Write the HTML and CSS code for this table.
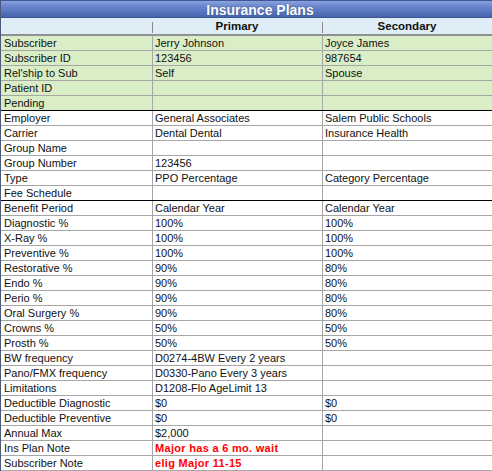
FILE: index.html
```html
<!DOCTYPE html>
<html>
<head>
<meta charset="utf-8">
<link rel="stylesheet" href="styles.css">
</head>
<body>
<div class="panel">
  <div class="title">Insurance Plans</div>
  <div class="head">
    <div class="hcell"></div>
    <div class="hcell sep">Primary</div>
    <div class="hcell sep">Secondary</div>
  </div>
  <div class="group green">
    <div class="row"><div class="c">Subscriber</div><div class="c">Jerry Johnson</div><div class="c">Joyce James</div></div>
    <div class="row"><div class="c">Subscriber ID</div><div class="c">123456</div><div class="c">987654</div></div>
    <div class="row"><div class="c">Rel'ship to Sub</div><div class="c">Self</div><div class="c">Spouse</div></div>
    <div class="row"><div class="c">Patient ID</div><div class="c"></div><div class="c"></div></div>
    <div class="row last"><div class="c">Pending</div><div class="c"></div><div class="c"></div></div>
  </div>
  <div class="group">
    <div class="row"><div class="c">Employer</div><div class="c">General Associates</div><div class="c">Salem Public Schools</div></div>
    <div class="row"><div class="c">Carrier</div><div class="c">Dental Dental</div><div class="c">Insurance Health</div></div>
    <div class="row"><div class="c">Group Name</div><div class="c"></div><div class="c"></div></div>
    <div class="row"><div class="c">Group Number</div><div class="c">123456</div><div class="c"></div></div>
    <div class="row"><div class="c">Type</div><div class="c">PPO Percentage</div><div class="c">Category Percentage</div></div>
    <div class="row last"><div class="c">Fee Schedule</div><div class="c"></div><div class="c"></div></div>
  </div>
  <div class="group">
    <div class="row"><div class="c">Benefit Period</div><div class="c">Calendar Year</div><div class="c">Calendar Year</div></div>
    <div class="row"><div class="c">Diagnostic %</div><div class="c">100%</div><div class="c">100%</div></div>
    <div class="row"><div class="c">X-Ray %</div><div class="c">100%</div><div class="c">100%</div></div>
    <div class="row"><div class="c">Preventive %</div><div class="c">100%</div><div class="c">100%</div></div>
    <div class="row"><div class="c">Restorative %</div><div class="c">90%</div><div class="c">80%</div></div>
    <div class="row"><div class="c">Endo %</div><div class="c">90%</div><div class="c">80%</div></div>
    <div class="row"><div class="c">Perio %</div><div class="c">90%</div><div class="c">80%</div></div>
    <div class="row"><div class="c">Oral Surgery %</div><div class="c">90%</div><div class="c">80%</div></div>
    <div class="row"><div class="c">Crowns %</div><div class="c">50%</div><div class="c">50%</div></div>
    <div class="row"><div class="c">Prosth %</div><div class="c">50%</div><div class="c">50%</div></div>
    <div class="row"><div class="c">BW frequency</div><div class="c">D0274-4BW Every 2 years</div><div class="c"></div></div>
    <div class="row"><div class="c">Pano/FMX frequency</div><div class="c">D0330-Pano Every 3 years</div><div class="c"></div></div>
    <div class="row"><div class="c">Limitations</div><div class="c">D1208-Flo AgeLimit 13</div><div class="c"></div></div>
    <div class="row"><div class="c">Deductible Diagnostic</div><div class="c">$0</div><div class="c">$0</div></div>
    <div class="row"><div class="c">Deductible Preventive</div><div class="c">$0</div><div class="c">$0</div></div>
    <div class="row"><div class="c">Annual Max</div><div class="c">$2,000</div><div class="c"></div></div>
    <div class="row"><div class="c">Ins Plan Note</div><div class="c note">Major has a 6 mo. wait</div><div class="c"></div></div>
    <div class="row"><div class="c">Subscriber Note</div><div class="c note">elig Major 11-15</div><div class="c"></div></div>
  </div>
</div>
</body>
</html>
```
FILE: styles.css
```css
html, body {
  margin: 0;
  padding: 0;
  background: #ffffff;
}

.panel {
  width: 491px;
  border-left: 1px solid #4a5a7a;
  font-family: "Liberation Sans", Arial, sans-serif;
  font-size: 11px;
  color: #111111;
}

.title {
  height: 18px;
  line-height: 18px;
  box-sizing: border-box;
  border-top: 1px solid #3e5796;
  border-bottom: 1px solid #3d5592;
  background: linear-gradient(to bottom, #8aa3dd 0%, #6985cc 35%, #5674bd 70%, #4563a8 100%);
  color: #ffffff;
  font-weight: bold;
  font-size: 14px;
  text-align: center;
  padding-left: 27px;
  text-shadow: 0 0 1px #2a3e78;
}

.head {
  display: grid;
  grid-template-columns: 151px 170px 170px;
  height: 16px;
  background: #deedf6;
  border-bottom: 2px solid #8f8f96;
}

.hcell {
  font-weight: bold;
  font-size: 11.5px;
  line-height: 16px;
  text-align: center;
  position: relative;
}

.hcell.sep::before {
  content: "";
  position: absolute;
  left: 0;
  top: 4px;
  bottom: 1px;
  width: 1px;
  background: #8a8a8a;
}

.group.green {
  background: #d9edc6;
}

.row {
  display: grid;
  grid-template-columns: 151px 170px 170px;
  height: 15px;
  box-sizing: border-box;
  border-bottom: 1px solid #a6a6a6;
}

.row.last {
  border-bottom-color: #000000;
}

.c {
  line-height: 14px;
  padding-left: 3px;
  white-space: nowrap;
  overflow: hidden;
}

.c + .c {
  border-left: 1px solid #a6a6a6;
  padding-left: 2px;
}

.note {
  color: #ff0000;
  font-weight: bold;
  letter-spacing: 0.3px;
}
```
